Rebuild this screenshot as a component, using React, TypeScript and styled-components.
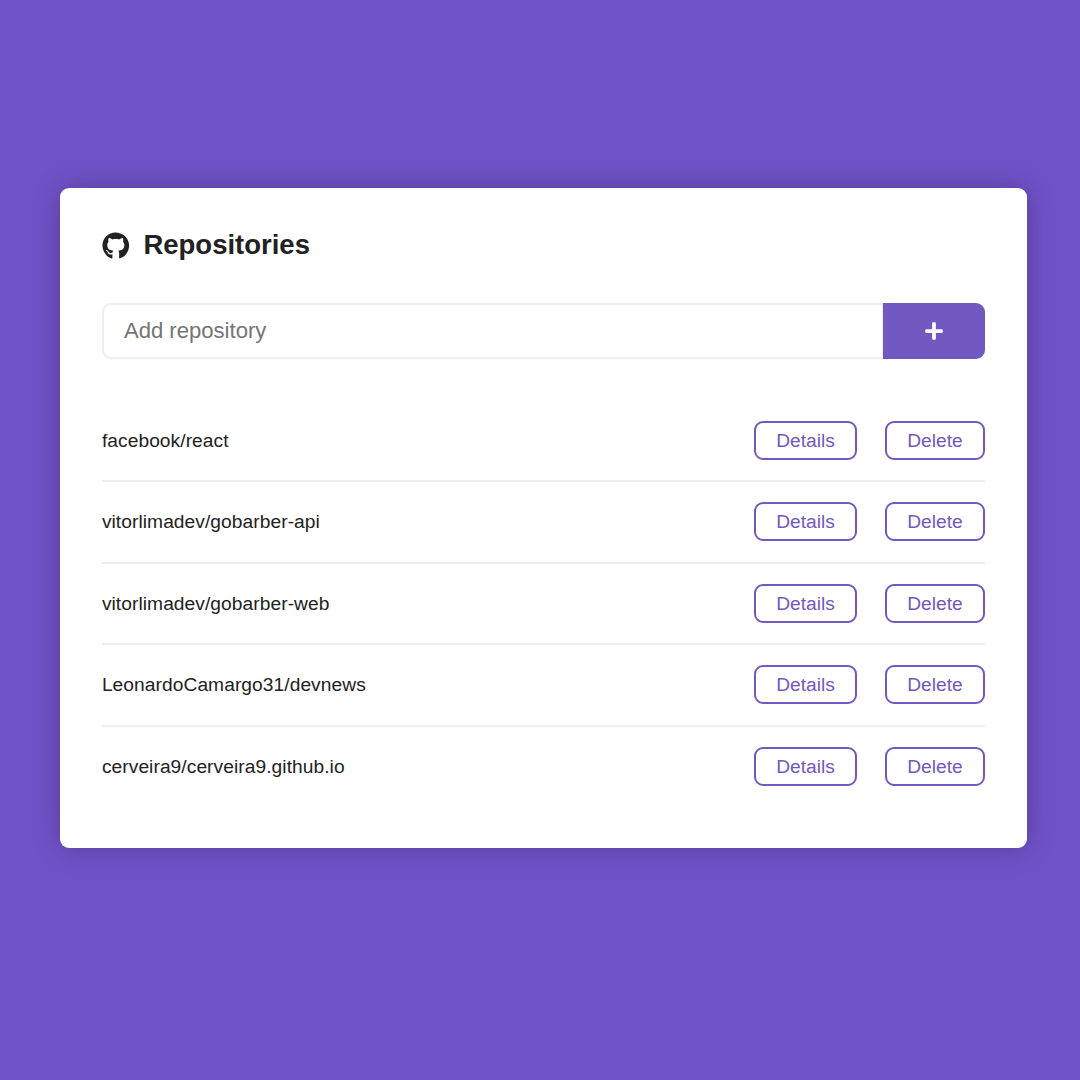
import React from 'react';
import styled, { createGlobalStyle } from 'styled-components';
import { FaGithub, FaPlus } from 'react-icons/fa';

const GlobalStyle = createGlobalStyle`
  * { margin: 0; padding: 0; box-sizing: border-box; outline: 0; }
  body { background: #7052c8; -webkit-font-smoothing: antialiased; }
  body, input, button { font-family: "Liberation Sans", Arial, sans-serif; color: #222; }
`;

const Page = styled.div`
  min-height: 1080px;
  padding: 188.4px 53.5px 0 60.4px;
`;

const Container = styled.main`
  height: 659.3px;
  padding: 40px 41.5px;
  background: #fff;
  border-radius: 9px;
  box-shadow: 0 0 28px rgba(0, 0, 0, 0.24);
`;

const Title = styled.h1`
  display: flex;
  align-items: center;
  height: 33px;
  font-size: 27.5px;
  line-height: 32px;
  svg { margin: 2px 14px 0 0; }
`;

const Form = styled.form`
  display: flex;
  height: 56px;
  margin-top: 41.4px;
`;

const Input = styled.input`
  flex: 1;
  min-width: 0;
  border: 2px solid #eee;
  border-right-width: 1px;
  border-radius: 9px 0 0 9px;
  padding: 0 20px;
  font-size: 22.1px;
  &::placeholder { color: #757575; opacity: 1; }
`;

const AddButton = styled.button`
  display: flex;
  align-items: center;
  justify-content: center;
  width: 102px;
  border: 0;
  border-radius: 0 9px 9px 0;
  background: #7159c1;
`;

const List = styled.ul`
  margin-top: 41.9px;
  list-style: none;
`;

const Row = styled.li`
  display: flex;
  align-items: center;
  height: 79.5px;
  font-size: 19.2px;
  letter-spacing: 0.06px;
  & + & { height: 81.5px; border-top: 2px solid #eee; }
`;

const Name = styled.span`
  flex: 1;
  padding-top: 0.6px;
`;

const Action = styled.button<{ $width: number }>`
  width: ${({ $width }) => $width}px;
  height: 39px;
  padding-top: 0.6px;
  border: 2px solid #7159c1;
  border-radius: 9px;
  background: #fff;
  color: #7159c1;
  font-size: 19.2px;
  & + & { margin-left: 28px; }
`;

const repositories = [
  'facebook/react',
  'vitorlimadev/gobarber-api',
  'vitorlimadev/gobarber-web',
  'LeonardoCamargo31/devnews',
  'cerveira9/cerveira9.github.io',
];

export default function App() {
  return (
    <Page>
      <GlobalStyle />
      <Container>
        <Title><FaGithub size={27.5} />Repositories</Title>
        <Form>
          <Input placeholder="Add repository" />
          <AddButton type="button" aria-label="Add"><FaPlus color="#fff" size={20} /></AddButton>
        </Form>
        <List>
          {repositories.map((name) => (
            <Row key={name}>
              <Name>{name}</Name>
              <Action $width={103}>Details</Action>
              <Action $width={100}>Delete</Action>
            </Row>
          ))}
        </List>
      </Container>
    </Page>
  );
}
